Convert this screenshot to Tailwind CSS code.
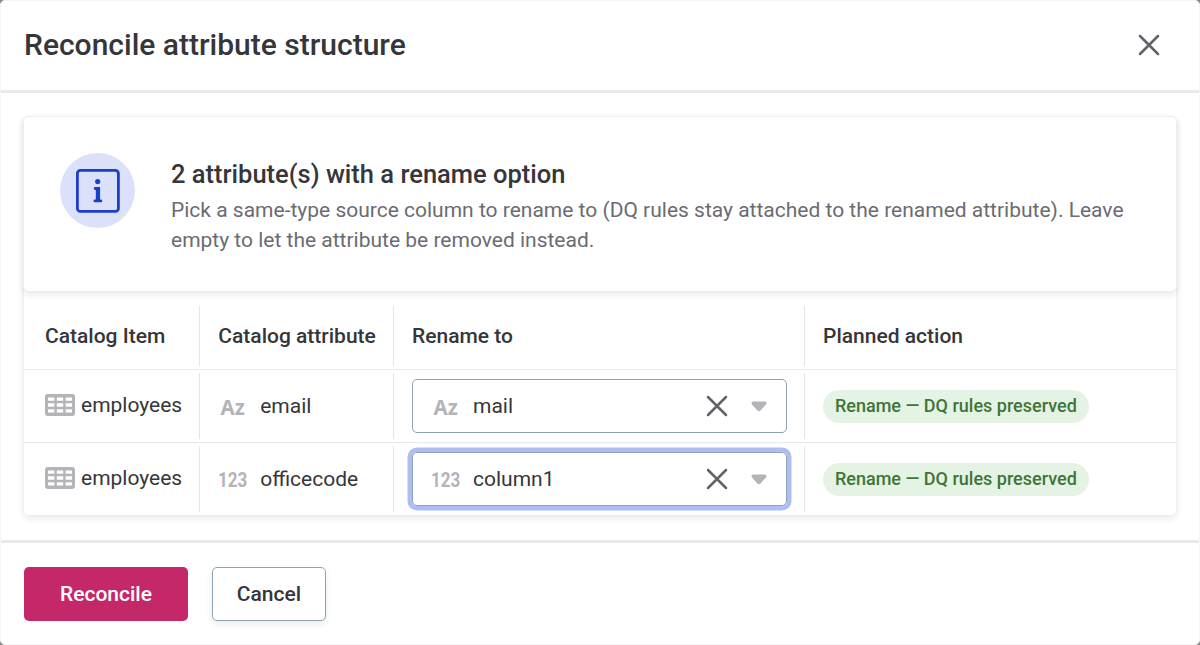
<!DOCTYPE html>
<html lang="en">
  <head>
    <meta charset="UTF-8" />
    <meta name="viewport" content="width=device-width, initial-scale=1.0" />
    <title>Reconcile attribute structure</title>
    <script src="https://cdn.jsdelivr.net/npm/@tailwindcss/browser@4"></script>
  </head>

  <body class="bg-[#88888c] font-['Roboto',sans-serif] text-[21px] text-[#36363a]">

    <!-- Shared icons -->
    <svg class="hidden">
      <symbol id="icon-close" viewBox="0 0 22 22">
        <path d="M2 2L20 20M20 2L2 20" fill="none" stroke="#62626a" stroke-width="2.5" stroke-linecap="round" />
      </symbol>
      <symbol id="icon-caret" viewBox="0 0 16 11">
        <path d="M1.8 0.5H14.2Q16.3 1.4 15 3.4L9.6 9.4Q8 10.9 6.4 9.4L1 3.4Q-0.3 1.4 1.8 0.5Z" fill="#b3b3b8" />
      </symbol>
      <symbol id="icon-table" viewBox="0 0 30 22">
        <rect width="30" height="22" rx="3" fill="#b3b3b8" />
        <path d="M3 3.4h6.4v3.4H3zM11.8 3.4h6.4v3.4h-6.4zM20.6 3.4H27v3.4h-6.4zM3 9.3h6.4v3.4H3zM11.8 9.3h6.4v3.4h-6.4zM20.6 9.3H27v3.4h-6.4zM3 15.2h6.4v3.4H3zM11.8 15.2h6.4v3.4h-6.4zM20.6 15.2H27v3.4h-6.4z" fill="#fff" />
      </symbol>
    </svg>

    <div class="flex flex-col w-[1200px] h-[645px] bg-white rounded-[5px] border border-[#f6f6f7] overflow-hidden">

      <!-- Header -->
      <header class="flex items-center justify-between h-[92px] shrink-0 pl-[23px] pr-[39px] pb-px border-b-3 border-[#e7ebee]">
        <h1 class="pb-[2px] text-[30px] font-medium whitespace-nowrap">Reconcile attribute structure</h1>
        <svg class="size-[22px]"><use href="#icon-close" /></svg>
      </header>

      <!-- Content -->
      <main class="flex-1 px-[22px] pt-[23px]">
        <div class="h-[400px] border border-[#eceff1] rounded-md shadow-[0_3px_6px_rgba(40,60,80,0.10)]">

          <!-- Info banner -->
          <section class="relative flex -mx-px -mt-px h-[176px] pl-[36px] pt-[36px] bg-white border border-[#eceff1] rounded-md shadow-[0_3px_6px_rgba(40,60,80,0.10)]">
            <div class="flex items-center justify-center size-[75px] shrink-0 rounded-full bg-[#dbe1fa]">
              <svg class="size-[44px]" viewBox="0.3 0.3 44 44" fill="none">
                <rect x="1.7" y="1.7" width="41" height="41" rx="3" stroke="#1d3fc4" stroke-width="2.8" />
                <circle cx="22" cy="12.9" r="2.6" fill="#1d3fc4" />
                <path d="M19.4 19.8h3.4M19.2 32.2h6" stroke="#1d3fc4" stroke-width="2.8" stroke-linecap="round" />
                <path d="M20.1 18.4h4.3v14.4h-4.3z" fill="#1d3fc4" />
              </svg>
            </div>
            <div class="ml-9 mt-[4px]">
              <h2 class="text-[25.5px] leading-[34px] font-medium whitespace-nowrap">2 attribute(s) with a rename option</h2>
              <p class="mt-[4px] leading-[30px] text-[#6b6b73] whitespace-nowrap">Pick a same-type source column to rename to (DQ rules stay attached to the renamed attribute). Leave<br />empty to let the attribute be removed instead.</p>
            </div>
          </section>

          <!-- Attribute table -->
          <div class="grid grid-cols-[177px_194px_411px_371px] grid-rows-[78px_73px_73px] -mx-px">
            <div class="flex flex-col border-b border-[#e7e9eb] pt-[14px] pb-[3px]"><div class="flex flex-1 items-center pl-[22px] pt-[2px] border-r border-[#e2e6e9] font-medium">Catalog Item</div></div>
            <div class="flex flex-col border-b border-[#e7e9eb] pt-[14px] pb-[3px]"><div class="flex flex-1 items-center pl-[18.3px] pt-[2px] border-r border-[#e2e6e9] font-medium">Catalog attribute</div></div>
            <div class="flex flex-col border-b border-[#e7e9eb] pt-[14px] pb-[3px]"><div class="flex flex-1 items-center pl-[18px] pt-[2px] border-r border-[#e2e6e9] font-medium">Rename to</div></div>
            <div class="flex items-center border-b border-[#e7e9eb] pt-[16px] pb-[3px] pl-[18px] font-medium">Planned action</div>

            <div class="flex flex-col border-b border-[#e7e9eb] py-[3px]">
              <div class="flex flex-1 items-center gap-[6px] pl-[22px] pb-[2px] border-r border-[#e2e6e9]"><svg class="w-[30px] h-[22px]"><use href="#icon-table" /></svg><span class="pt-[2px]">employees</span></div>
            </div>
            <div class="flex flex-col border-b border-[#e7e9eb] py-[3px]">
              <div class="flex flex-1 items-center pl-[20.5px] border-r border-[#e2e6e9]"><span class="w-[39.7px] pt-[2px] font-['Noto_Sans',sans-serif] text-[20.5px] font-bold text-[#b3b3b8]">Az</span><span class="pt-[2px]">email</span></div>
            </div>
            <div class="flex flex-col border-b border-[#e7e9eb] py-[3px]">
              <div class="flex flex-1 items-center pl-[18px] border-r border-[#e2e6e9]">
                <div class="flex items-center w-[375px] h-[54px] pl-[20.5px] border border-[#8fa4b3] rounded-[5px]">
                  <span class="w-[39.5px] pt-[2px] font-['Noto_Sans',sans-serif] text-[20.5px] font-bold text-[#b3b3b8]">Az</span>
                  <span class="flex-1 pt-[2px]">mail</span>
                  <svg class="size-[22px] mr-[23px]"><use href="#icon-close" /></svg>
                  <svg class="w-[16px] h-[11px] mr-[19px]"><use href="#icon-caret" /></svg>
                </div>
              </div>
            </div>
            <div class="flex items-center border-b border-[#e7e9eb] pl-[18px]"><span class="h-[33px] px-3 rounded-full bg-[#e4f3e3] text-[18px] leading-[32px] font-medium text-[#3f7538]">Rename — DQ rules preserved</span></div>

            <div class="flex flex-col pt-[3px] pb-[4px]">
              <div class="flex flex-1 items-center gap-[6px] pl-[22px] pb-[2px] border-r border-[#e2e6e9]"><svg class="w-[30px] h-[22px]"><use href="#icon-table" /></svg><span class="pt-[2px]">employees</span></div>
            </div>
            <div class="flex flex-col pt-[3px] pb-[4px]">
              <div class="flex flex-1 items-center pl-[18px] border-r border-[#e2e6e9]"><span class="w-[42.2px] pt-[3px] origin-left scale-x-[0.83] text-[20.5px] font-bold text-[#b3b3b8]">123</span><span class="pt-[2px]">officecode</span></div>
            </div>
            <div class="flex flex-col pt-[3px] pb-[4px]">
              <div class="flex flex-1 items-center pl-[18px] border-r border-[#e2e6e9]">
                <div class="flex items-center w-[375px] h-[54px] pl-[18px] border border-[#8fa4b3] rounded-[5px] ring-[4.5px] ring-[#aebef5]">
                  <span class="w-[42px] pt-[3px] origin-left scale-x-[0.83] text-[20.5px] font-bold text-[#b3b3b8]">123</span>
                  <span class="flex-1 pt-[2px]">column1</span>
                  <svg class="size-[22px] mr-[23px]"><use href="#icon-close" /></svg>
                  <svg class="w-[16px] h-[11px] mr-[19px]"><use href="#icon-caret" /></svg>
                </div>
              </div>
            </div>
            <div class="flex items-center pl-[18px] pb-px"><span class="h-[33px] px-3 rounded-full bg-[#e4f3e3] text-[18px] leading-[32px] font-medium text-[#3f7538]">Rename — DQ rules preserved</span></div>
          </div>
        </div>
      </main>

      <!-- Footer -->
      <footer class="flex gap-6 h-[104px] shrink-0 pl-[23px] pt-[24px] border-t-3 border-[#e7ebee]">
        <button class="w-[164px] h-[54px] pt-[2px] rounded-[5px] bg-[#c42868] font-medium text-white">Reconcile</button>
        <button class="w-[114px] h-[54px] pt-[2px] rounded-[5px] border border-[#8fa4b3] bg-white font-medium shadow-[0_3px_6px_rgba(40,60,80,0.10)]">Cancel</button>
      </footer>
    </div>
  </body>
</html>
